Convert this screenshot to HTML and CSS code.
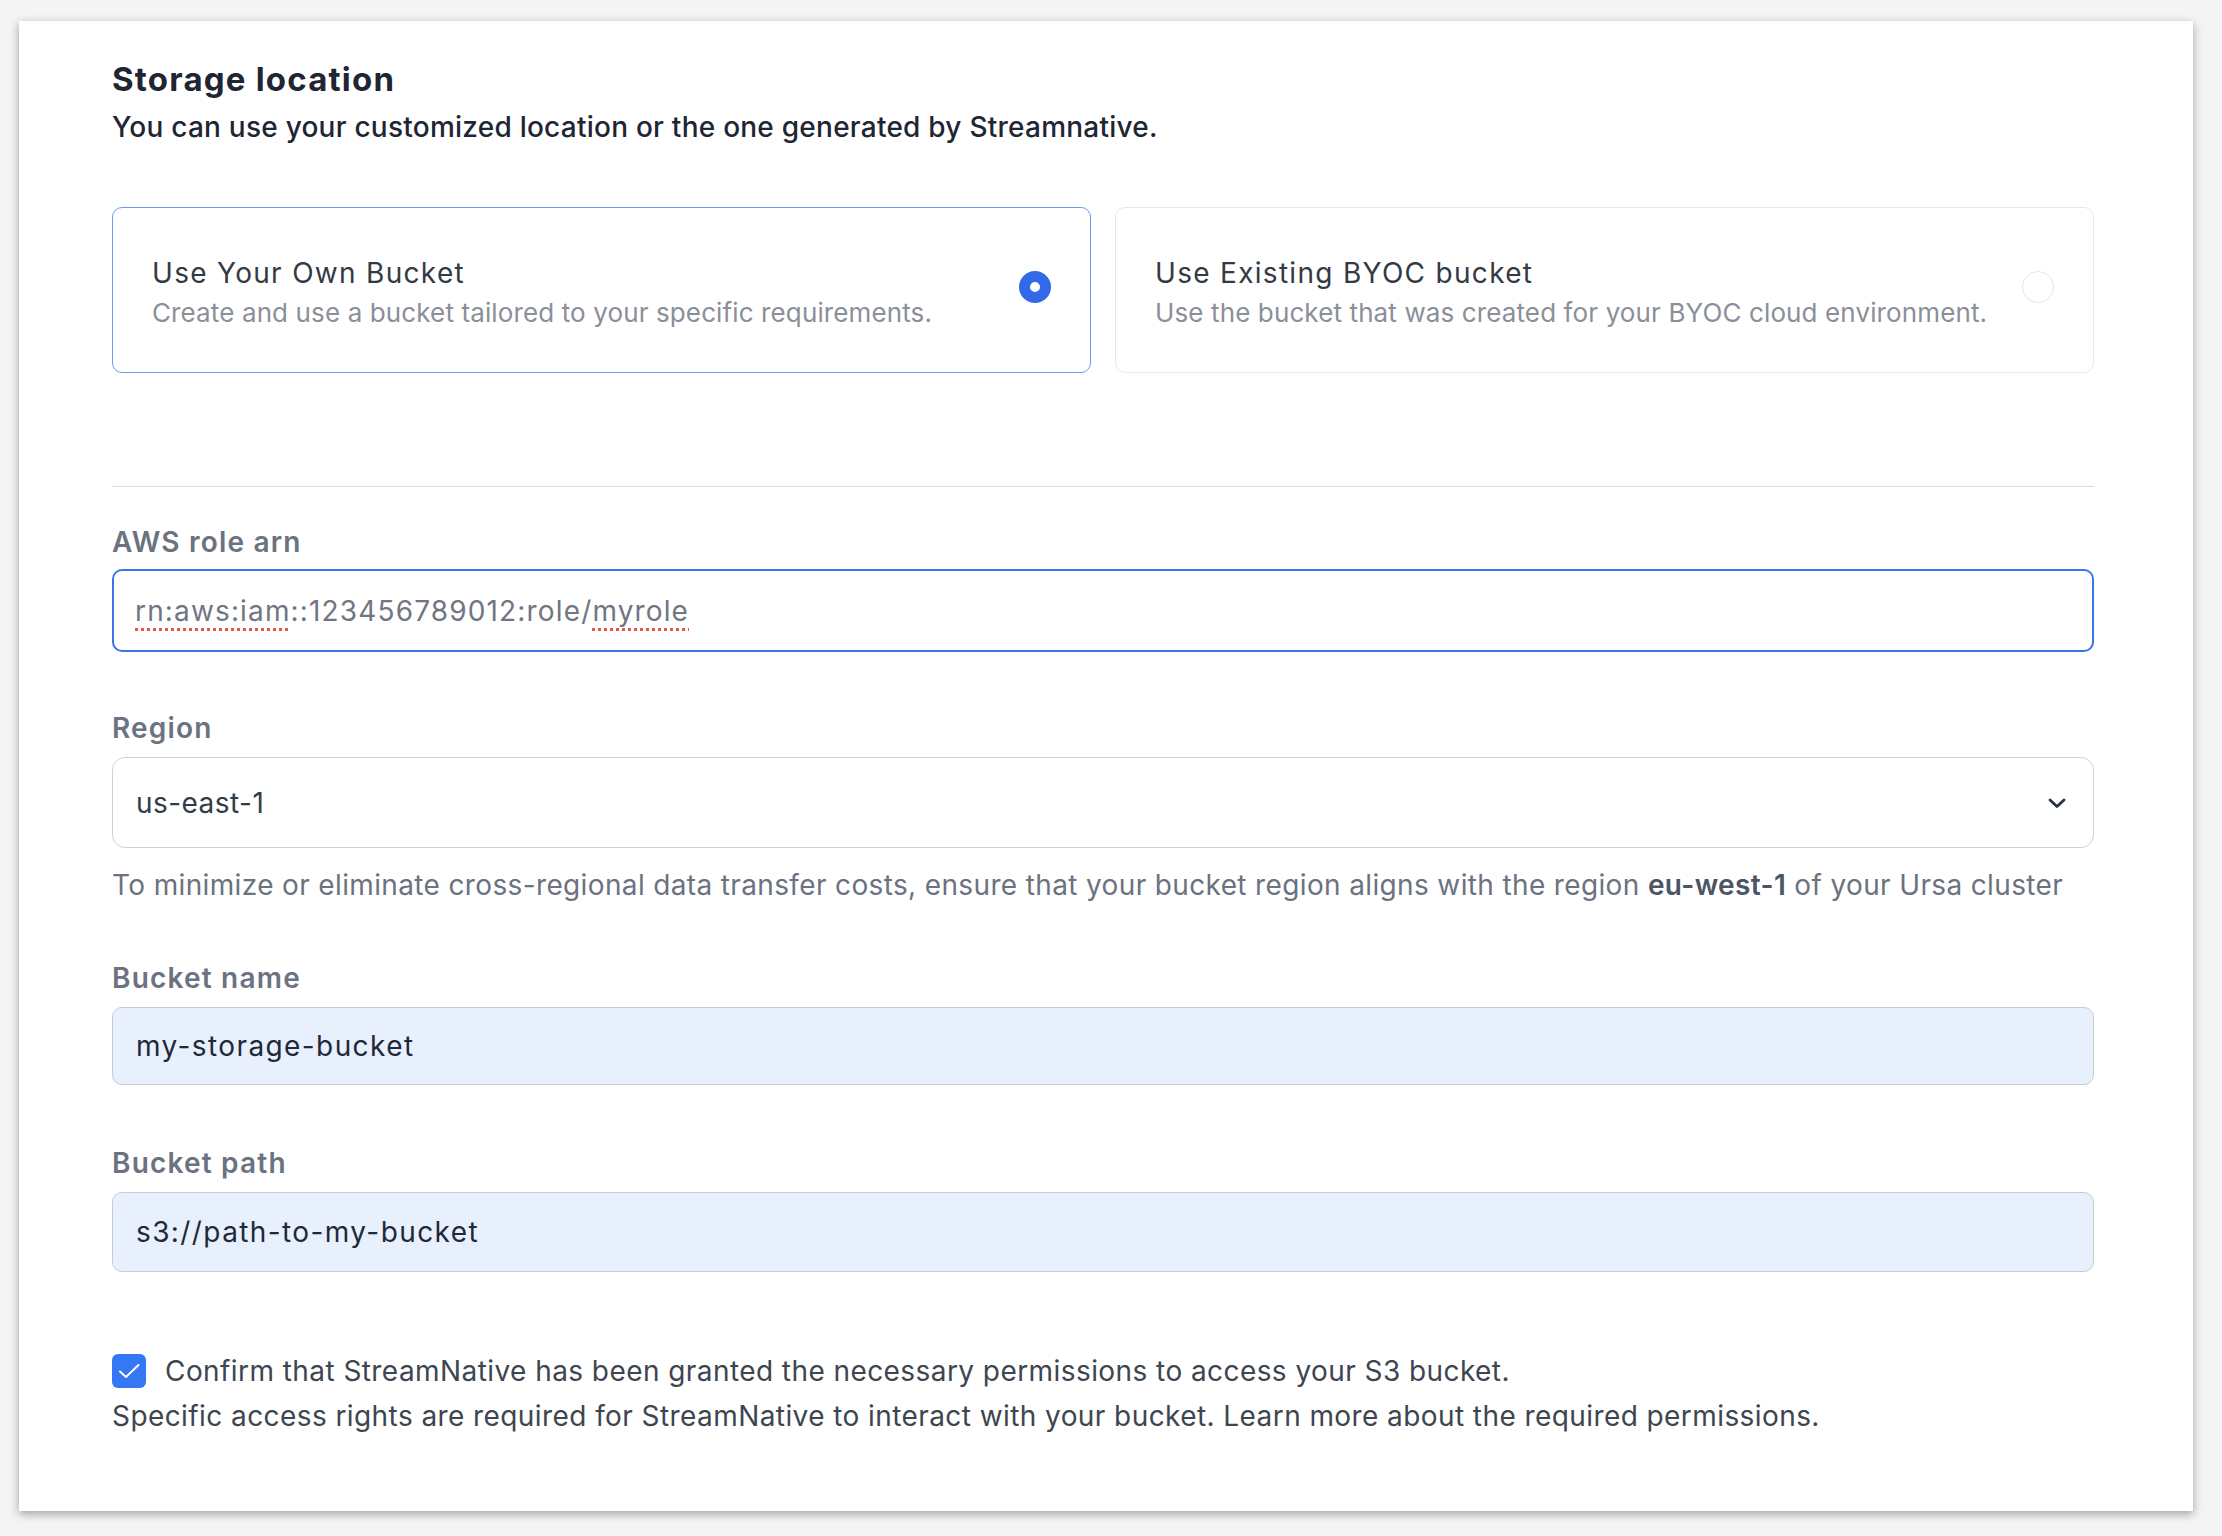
FILE: index.html
```html
<!DOCTYPE html>
<html lang="en">
<head>
    <meta charset="UTF-8">
    <meta name="viewport" content="width=device-width, initial-scale=1.0">
    <title>Storage location</title>
    <link rel="stylesheet" href="styles.css">
</head>
<body>
    <div class="panel">
        <h2 class="title">Storage location</h2>
        <p class="subtitle">You can use your customized location or the one generated by Streamnative.</p>

        <div class="options">
            <label class="option selected">
                <div class="option-text">
                    <div class="option-title">Use Your Own Bucket</div>
                    <div class="option-desc">Create and use a bucket tailored to your specific requirements.</div>
                </div>
                <input type="radio" name="bucket" value="own" checked>
            </label>
            <label class="option">
                <div class="option-text">
                    <div class="option-title">Use Existing BYOC bucket</div>
                    <div class="option-desc">Use the bucket that was created for your BYOC cloud environment.</div>
                </div>
                <input type="radio" name="bucket" value="byoc">
            </label>
        </div>

        <hr class="divider">

        <div class="form-group first">
            <label class="field-label">AWS role arn</label>
            <div class="input focused"><span class="typo">rn:aws:iam</span>::123456789012:role/<span class="typo">myrole</span></div>
        </div>

        <div class="form-group">
            <label class="field-label" for="region">Region</label>
            <div class="select-wrap">
                <select id="region" class="select">
                    <option>us-east-1</option>
                    <option>us-west-2</option>
                    <option>eu-west-1</option>
                </select>
                <svg class="chevron" width="18" height="11" viewBox="0 0 18 11">
                    <polyline points="2,2 9,8.5 16,2" fill="none" stroke="#2a323b" stroke-width="2.8" stroke-linecap="round" stroke-linejoin="round"/>
                </svg>
            </div>
        </div>
        <p class="hint">To minimize or eliminate cross-regional data transfer costs, ensure that your bucket region aligns with the region <b>eu-west-1</b> of your Ursa cluster</p>

        <div class="form-group tight">
            <label class="field-label" for="bucketName">Bucket name</label>
            <input type="text" id="bucketName" class="input filled" value="my-storage-bucket">
        </div>

        <div class="form-group loose">
            <label class="field-label" for="bucketPath">Bucket path</label>
            <input type="text" id="bucketPath" class="input filled" value="s3://path-to-my-bucket">
        </div>

        <div class="confirm">
            <span class="checkbox">
                <svg width="34" height="34" viewBox="0 0 34 34">
                    <polyline points="8,17.5 14,23 26.5,11" fill="none" stroke="#fff" stroke-width="2" stroke-linecap="round" stroke-linejoin="round"/>
                </svg>
            </span>
            <span>Confirm that StreamNative has been granted the necessary permissions to access your S3 bucket.</span>
        </div>
        <p class="note">Specific access rights are required for StreamNative to interact with your bucket. Learn more about the required permissions.</p>
    </div>
</body>
</html>
```

FILE: styles.css
```css
body {
    margin: 0;
    padding: 21px 29px 27px 19px;
    background-color: #f4f4f4;
    font-family: Inter, "Noto Sans", sans-serif;
    color: #1f2937;
}
.panel {
    background-color: #fff;
    padding: 40px 99px 77px 93px;
    box-shadow: 0 3px 9px rgba(0, 0, 0, 0.35);
}
.title {
    margin: 0;
    font-size: 33px;
    line-height: 36px;
    font-weight: 700;
    letter-spacing: 1.2px;
    color: #1e2633;
}
.subtitle {
    margin: 12px 0 0;
    font-size: 28px;
    line-height: 36px;
    font-weight: 500;
    letter-spacing: 0.24px;
    color: #1e2633;
}
.options {
    display: grid;
    grid-template-columns: 1fr 1fr;
    gap: 24px;
    margin-top: 62px;
}
.option {
    display: flex;
    justify-content: space-between;
    align-items: flex-start;
    height: 166px;
    box-sizing: border-box;
    padding: 47px 39px 0 39px;
    border: 1px solid #e6e8eb;
    border-radius: 10px;
    cursor: pointer;
}
.option.selected {
    border-color: #6b9af0;
}
.option-title {
    font-size: 28px;
    line-height: 36px;
    font-weight: 400;
    letter-spacing: 1.3px;
    color: #333a44;
}
.option-desc {
    margin-top: 5px;
    font-size: 26px;
    line-height: 34px;
    letter-spacing: 0.12px;
    color: #8a8f98;
}
.option input[type="radio"] {
    appearance: none;
    -webkit-appearance: none;
    flex: none;
    width: 32px;
    height: 32px;
    margin: 16px 0 0;
    border: 1px solid #e4e6e9;
    border-radius: 50%;
    background: #fff;
}
.option input[type="radio"]:checked {
    border: 11px solid #3169e8;
}
.divider {
    margin: 113px 0 0;
    border: none;
    border-top: 1px solid #d9dce1;
}
.form-group {
    margin-top: 59px;
}
.form-group.first {
    margin-top: 38px;
}
.form-group.tight {
    margin-top: 58px;
}
.form-group.loose {
    margin-top: 61px;
}
.field-label {
    display: block;
    margin-bottom: 12px;
    font-size: 28px;
    line-height: 34px;
    font-weight: 600;
    letter-spacing: 1.2px;
    color: #6b7280;
}
.form-group.first .field-label {
    margin-bottom: 10px;
}
.input {
    display: block;
    width: 100%;
    box-sizing: border-box;
    height: 78px;
    padding: 0 23px;
    border: 1px solid #c6ccd4;
    border-radius: 10px;
    font-family: inherit;
    font-size: 28px;
    letter-spacing: 1.4px;
    color: #1f2937;
    outline: none;
}
.input.focused {
    display: flex;
    align-items: center;
    height: 83px;
    padding-left: 21px;
    border: 2.5px solid #3a75e6;
    letter-spacing: 1.15px;
    color: #6f7682;
}
.input.filled {
    background-color: #e8f0fe;
}
#bucketPath {
    height: 80px;
}
.typo {
    text-decoration: underline dotted #e5534b;
    text-decoration-thickness: 3px;
    text-underline-offset: 7px;
}
.select-wrap {
    position: relative;
}
.select {
    appearance: none;
    -webkit-appearance: none;
    display: block;
    width: 100%;
    height: 91px;
    padding: 0 23px;
    border: 1px solid #cdd2d8;
    border-radius: 13px;
    background: #fff;
    font-family: inherit;
    font-size: 28px;
    letter-spacing: 0.45px;
    color: #333c46;
}
.chevron {
    position: absolute;
    right: 28px;
    top: 41px;
    pointer-events: none;
}
.hint {
    margin: 19px 0 0;
    font-size: 28px;
    line-height: 36px;
    letter-spacing: 0.36px;
    color: #6b7280;
}
.hint b {
    font-weight: 600;
    color: #4b5563;
}
.confirm {
    display: flex;
    align-items: center;
    gap: 19px;
    margin-top: 81px;
    font-size: 28px;
    line-height: 36px;
    letter-spacing: 0.43px;
    color: #3d4650;
}
.checkbox {
    display: block;
    flex: none;
    width: 34px;
    height: 34px;
    border-radius: 6px;
    background-color: #3478f6;
}
.checkbox svg {
    display: block;
}
.note {
    margin: 9px 0 0;
    font-size: 28px;
    line-height: 36px;
    letter-spacing: 0.42px;
    color: #3d4650;
}
```
